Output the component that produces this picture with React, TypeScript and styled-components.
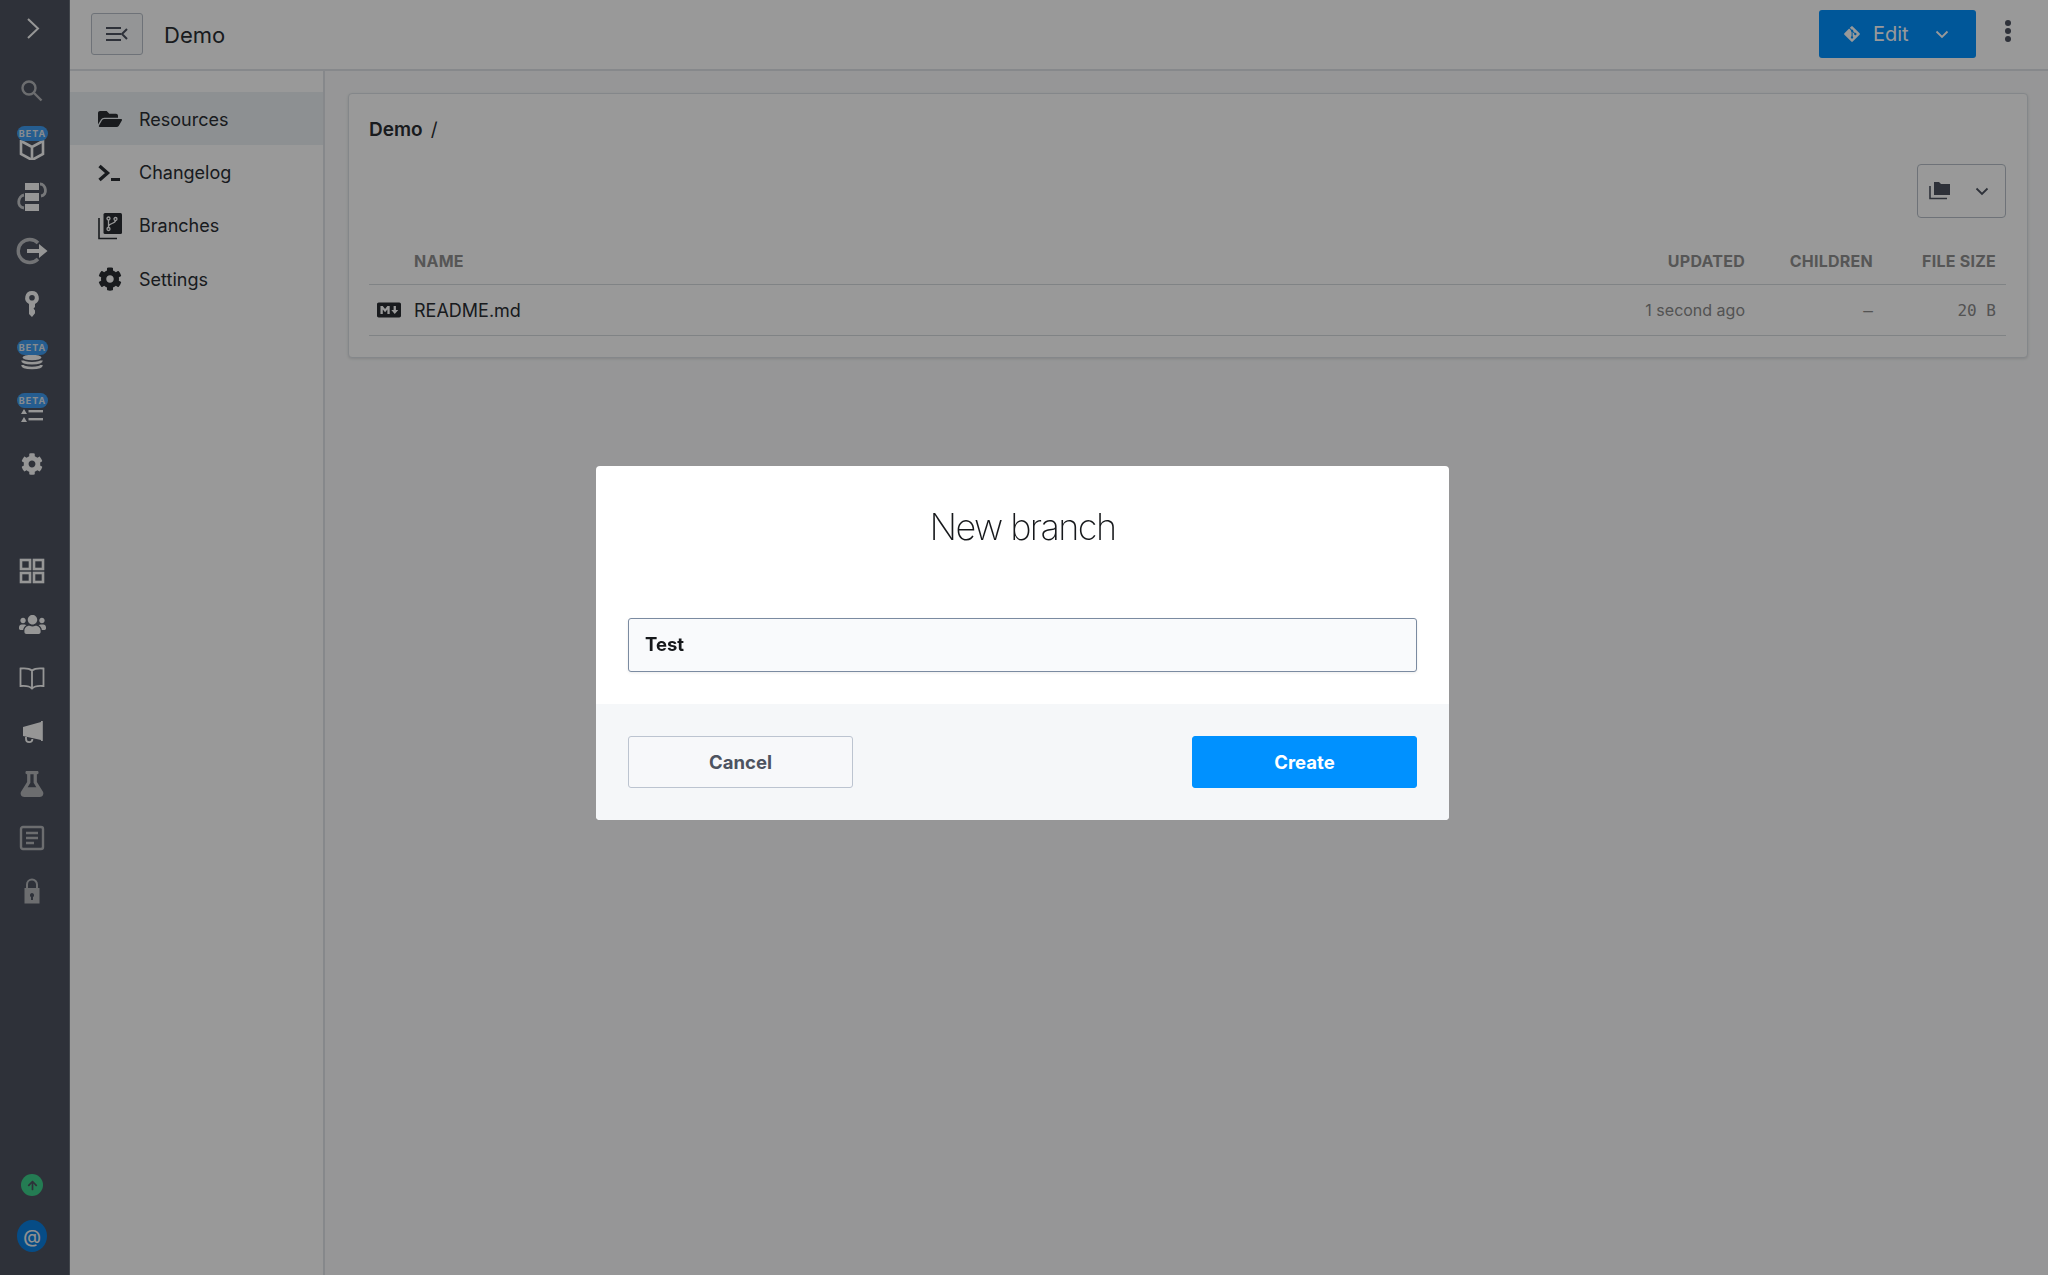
import React from 'react';
import styled, { createGlobalStyle } from 'styled-components';
import { FaCog, FaFlask, FaFolderOpen, FaGitAlt, FaMarkdown, FaUsers, FaArrowUp } from 'react-icons/fa';

const GlobalStyle = createGlobalStyle`
  html, body {
    margin: 0;
    padding: 0;
    height: 100%;
    font-family: Inter, "Liberation Sans", sans-serif;
    background: #fafbfc;
  }
  * { box-sizing: border-box; }
`;

const Page = styled.div`
  display: flex;
  width: 2048px;
  height: 1275px;
  overflow: hidden;
`;

const Rail = styled.aside`
  width: 70px;
  flex: none;
  display: flex;
  flex-direction: column;
  background: #4d5360;
  border-right: 1px solid #6d737e;
  padding-right: 5px;
`;

const RailGroup = styled.div<{ $gap?: number }>`
  display: flex;
  flex-direction: column;
  margin-top: ${(p) => p.$gap ?? 0}px;
`;

const RailItem = styled.div<{ $dim?: boolean; $height?: number }>`
  position: relative;
  height: ${(p) => p.$height ?? 53.4}px;
  display: flex;
  align-items: center;
  justify-content: center;
  color: ${(p) => (p.$dim ? '#b4b6ba' : '#fbfbfb')};
`;

const BetaBadge = styled.span`
  position: absolute;
  left: 17px;
  top: 9px;
  width: 31px;
  height: 15px;
  border-radius: 8px;
  background: #3f9cf0;
  color: #e2e8ef;
  font-size: 9px;
  font-weight: 700;
  letter-spacing: 1px;
  line-height: 15px;
  text-align: center;
`;

const RailFoot = styled.div`
  margin-top: auto;
  display: flex;
  flex-direction: column;
  align-items: center;
  gap: 24px;
  padding-bottom: 23px;
`;

const UpdateDot = styled.div`
  width: 22px;
  height: 22px;
  border-radius: 50%;
  background: #3dcf8a;
  color: #4d5360;
  display: flex;
  align-items: center;
  justify-content: center;
  font-size: 11px;
`;

const AvatarDot = styled.div`
  width: 30px;
  height: 32px;
  border-radius: 50%;
  background: #0a7fe0;
  color: #f0f0f0;
  display: flex;
  align-items: center;
  justify-content: center;
  font-size: 18px;
  font-weight: 500;
`;

const Body = styled.div`
  flex: 1;
  display: flex;
  flex-direction: column;
  min-width: 0;
`;

const TopBar = styled.header`
  height: 71px;
  flex: none;
  display: flex;
  align-items: center;
  background: #fff;
  border-bottom: 2px solid #dfe3e8;
  padding: 0 34px 2px 21px;
`;

const ToggleButton = styled.button`
  width: 52px;
  height: 42px;
  display: flex;
  align-items: center;
  justify-content: center;
  background: #f7f8fa;
  border: 1px solid #b7bfc9;
  border-radius: 3px;
  color: #4d5360;
  padding: 0;
`;

const Title = styled.h1`
  margin: 3px 0 0 21px;
  font-size: 22px;
  font-weight: 400;
  color: #2a2e33;
`;

const EditButton = styled.button`
  margin-left: auto;
  width: 157px;
  height: 48px;
  display: flex;
  align-items: center;
  background: #0091ff;
  border: 0;
  border-radius: 3px;
  color: #fff;
  padding: 1px 0 0 24px;
  font-family: inherit;
  font-size: 20px;
  gap: 12px;

  svg:last-child {
    margin-left: 14px;
  }
`;

const Kebab = styled.div`
  width: 12px;
  margin: 0 0 0 26px;
  display: flex;
  flex-direction: column;
  align-items: center;
  gap: 2px;
  transform: translateY(-3px);

  span {
    width: 6px;
    height: 6px;
    border-radius: 50%;
    background: #4d5360;
  }
`;

const Columns = styled.div`
  flex: 1;
  display: flex;
  min-height: 0;
`;

const NavPanel = styled.nav`
  width: 255px;
  flex: none;
  background: #fff;
  border-right: 2px solid #dfe3e8;
  padding-top: 21px;
`;

const NavRow = styled.div<{ $active?: boolean }>`
  height: 53.4px;
  display: flex;
  align-items: center;
  gap: 17px;
  padding: 1px 0 0 28px;
  background: ${(p) => (p.$active ? '#ebf1f4' : 'transparent')};
  color: #2a2e33;
  font-size: 18px;
`;

const NavIcon = styled.span`
  width: 24px;
  height: 24px;
  display: flex;
  align-items: center;
  justify-content: center;
  font-size: 24px;
`;

const Content = styled.main`
  flex: 1;
  padding: 22px 20px 0 23px;
  min-width: 0;
`;

const Card = styled.section`
  height: 265px;
  background: #fff;
  border: 1px solid #dde1e6;
  border-radius: 4px;
  box-shadow: 0 1px 3px rgba(0, 0, 0, 0.12);
  padding: 0 21px 0 20px;
`;

const Crumb = styled.div`
  height: 70px;
  display: flex;
  align-items: center;
  gap: 8px;
  color: #2a2e33;
  font-size: 19px;
  font-weight: 600;
  padding-top: 1px;

  span {
    font-weight: 400;
  }
`;

const ToolRow = styled.div`
  display: flex;
  justify-content: flex-end;
`;

const ViewSelect = styled.div`
  width: 89px;
  height: 54px;
  display: flex;
  align-items: center;
  justify-content: space-between;
  background: #fff;
  border: 1px solid #b7bfc9;
  border-radius: 4px;
  color: #4d5360;
  padding: 0 16px 0 11px;
`;

const TableRow = styled.div<{ $head?: boolean }>`
  display: grid;
  grid-template-columns: 45px 1fr 120px 128px 123px;
  align-items: center;
  height: ${(p) => (p.$head ? 67 : 51)}px;
  padding-top: ${(p) => (p.$head ? 20 : 0)}px;
  border-bottom: 1px solid #d6dade;
`;

const FileGlyph = styled.span`
  display: flex;
  padding-left: 8px;
  color: #2a2e33;
  font-size: 24px;
`;

const HeadCell = styled.div<{ $right?: boolean }>`
  padding-right: 10px;
  font-size: 16px;
  font-weight: 700;
  letter-spacing: 0.25px;
  color: #8f8f8f;
  text-align: ${(p) => (p.$right ? 'right' : 'left')};
`;

const NameCell = styled.div`
  font-size: 18px;
  color: #2a2e33;
`;

const DataCell = styled.div<{ $mono?: boolean }>`
  padding-right: 10px;
  text-align: right;
  color: #8a8a8a;
  font-size: 16px;
  font-family: ${(p) => (p.$mono ? '"DejaVu Sans Mono", monospace' : 'inherit')};
  white-space: nowrap;
`;

const Overlay = styled.div`
  position: fixed;
  inset: 0;
  display: flex;
  align-items: flex-start;
  justify-content: center;
  padding: 466px 3px 0 0;
  background: rgba(0, 0, 0, 0.4);
`;

const Modal = styled.div`
  width: 853px;
  height: 354px;
  display: flex;
  flex-direction: column;
  background: #fff;
  border-radius: 4px;
  overflow: hidden;
`;

const ModalBody = styled.div`
  height: 238px;
  flex: none;
  padding: 0 32px;
  display: flex;
  flex-direction: column;
`;

const ModalTitle = styled.h2`
  margin: 0;
  height: 152px;
  display: flex;
  align-items: center;
  justify-content: center;
  padding-bottom: 31px;
  font-size: 36px;
  font-weight: 200;
  letter-spacing: -1.6px;
  color: #16181b;
`;

const NameInput = styled.input`
  width: 100%;
  height: 54px;
  padding: 0 16px 2px;
  background: #f9fafc;
  border: 1px solid #7b8ba1;
  border-radius: 3px;
  box-shadow: 0 1px 3px rgba(0, 0, 0, 0.08);
  font-family: inherit;
  font-size: 18.5px;
  font-weight: 700;
  color: #16181b;
  outline: none;
`;

const ModalFoot = styled.div`
  flex: 1;
  display: flex;
  justify-content: space-between;
  padding: 32px 32px 0;
  background: #f5f7f9;
`;

const FootButton = styled.button<{ $primary?: boolean }>`
  width: 225px;
  height: 52px;
  border-radius: 3px;
  border: 1px solid ${(p) => (p.$primary ? '#0091ff' : '#bcc4d0')};
  background: ${(p) => (p.$primary ? '#0091ff' : '#f7f8fa')};
  color: ${(p) => (p.$primary ? '#fff' : '#4d5360')};
  font-family: inherit;
  font-size: 18.5px;
  font-weight: 700;
`;

const Chevron = ({ size = 14 }: { size?: number }) => (
  <svg width={size} height={size} viewBox="0 0 14 14" fill="none" stroke="currentColor" strokeWidth="1.8">
    <path d="M1.5 4.5 7 10l5.5-5.5" />
  </svg>
);

const Glyph = ({ children }: { children: React.ReactNode }) => (
  <svg width="32" height="32" viewBox="0 0 32 32" fill="currentColor">
    {children}
  </svg>
);

const RailIcons: Record<string, React.ReactNode> = {
  search: (
    <g fill="none" stroke="currentColor" strokeWidth="2.4">
      <circle cx="13" cy="13" r="6.5" />
      <path d="M18 18l7.5 7.5" />
    </g>
  ),
  cube: (
    <g fill="none" stroke="currentColor" strokeWidth="2.6">
      <path d="M5 12v14l11 6 11-6V12" />
      <path d="M5 13l11 6 11-6M16 19v12" />
    </g>
  ),
  stack: (
    <>
      <rect x="9" y="2" width="14" height="7" />
      <rect x="9" y="12" width="14" height="8" />
      <rect x="9" y="23" width="14" height="7" />
      <path d="M24 3c6 0 8 11 1 12M8 14C2 15 0 26 8 27" fill="none" stroke="currentColor" strokeWidth="2.8" opacity=".7" />
    </>
  ),
  exit: (
    <>
      <path d="M22 8A11.5 11.5 0 1 0 22 24" fill="none" stroke="currentColor" strokeWidth="3.4" opacity=".65" />
      <path d="M11 14h12V9l8.5 7-8.5 7v-5H11z" />
    </>
  ),
  key: (
    <path
      fillRule="evenodd"
      d="M16 3a6.8 6.8 0 0 1 3 12.9V19l-1.5 1.6 1.5 2v2.6L16 29l-3-3V15.9A6.8 6.8 0 0 1 16 3zm0 4a2.8 2.8 0 1 0 0 5.6A2.8 2.8 0 0 0 16 7z"
    />
  ),
  db: (
    <g fill="none" stroke="currentColor" strokeWidth="2.6">
      <ellipse cx="16" cy="15.5" rx="9.5" ry="2.8" fill="currentColor" stroke="none" />
      <path d="M6.5 18.500c0 3.600 19 3.600 19 0M6.500 23c0 4 19 4 19 0" />
    </g>
  ),
  list: (
    <>
      <path d="M5 19l3-5 3 5zM5 27l3-5 3 5z" />
      <rect x="12.500" y="15" width="14.500" height="2.400" />
      <rect x="12.500" y="23" width="14.500" height="2.400" />
    </>
  ),
  grid: (
    <g fill="none" stroke="currentColor" strokeWidth="2.6">
      <rect x="5" y="5" width="9" height="9" />
      <rect x="18" y="5" width="9" height="9" />
      <rect x="5" y="18" width="9" height="9" />
      <rect x="18" y="18" width="9" height="9" />
    </g>
  ),
  book: (
    <path
      d="M16 8.500C13.500 6.500 9 6 4.500 6.500V24c4.500-.5 9 0 11.500 2.500 2.500-2.500 7-3 11.500-2.500V6.500C23 6 18.500 6.500 16 8.500zm0 0V26"
      fill="none"
      stroke="currentColor"
      strokeWidth="1.800"
    />
  ),
  horn: (
    <>
      <path d="M7 12l18-5v18l-18-4z" />
      <rect x="25" y="6" width="1.800" height="20" />
      <path d="M10 22v2a3.200 3.200 0 0 0 6.400 0" fill="none" stroke="currentColor" strokeWidth="1.800" />
    </>
  ),
  doc: (
    <g fill="none" stroke="currentColor" strokeWidth="2.400">
      <rect x="5" y="5" width="22" height="22" rx="2" />
      <path d="M10 11h12M10 16h12M10 21h8" />
    </g>
  ),
  lock: (
    <>
      <path d="M11 14V9.500a5 5 0 0 1 10 0V14" fill="none" stroke="currentColor" strokeWidth="2" />
      <path
        fillRule="evenodd"
        d="M8.500 13h15v15.500h-15zM16 18a2.200 2.200 0 0 0-1 4.100V25h2v-2.900A2.200 2.200 0 0 0 16 18z"
      />
    </>
  ),
};

const App = () => (
  <>
    <GlobalStyle />
    <Page>
      <Rail>
        <RailItem $height={56}>
          <svg width="32" height="32" viewBox="0 0 32 32" fill="none" stroke="currentColor" strokeWidth="2">
            <path d="M12 7l10 9.500-10 9.500" />
          </svg>
        </RailItem>
        <RailGroup $gap={8}>
          <RailItem $dim><Glyph>{RailIcons.search}</Glyph></RailItem>
          <RailItem><BetaBadge>BETA</BetaBadge><Glyph>{RailIcons.cube}</Glyph></RailItem>
          <RailItem><Glyph>{RailIcons.stack}</Glyph></RailItem>
          <RailItem><Glyph>{RailIcons.exit}</Glyph></RailItem>
          <RailItem><Glyph>{RailIcons.key}</Glyph></RailItem>
          <RailItem><BetaBadge>BETA</BetaBadge><Glyph>{RailIcons.db}</Glyph></RailItem>
          <RailItem><BetaBadge>BETA</BetaBadge><Glyph>{RailIcons.list}</Glyph></RailItem>
          <RailItem><FaCog size={22} /></RailItem>
        </RailGroup>
        <RailGroup $gap={53}>
          <RailItem><Glyph>{RailIcons.grid}</Glyph></RailItem>
          <RailItem><FaUsers size={27} /></RailItem>
          <RailItem><Glyph>{RailIcons.book}</Glyph></RailItem>
          <RailItem><Glyph>{RailIcons.horn}</Glyph></RailItem>
          <RailItem $dim><FaFlask size={26} /></RailItem>
          <RailItem $dim><Glyph>{RailIcons.doc}</Glyph></RailItem>
          <RailItem $dim><Glyph>{RailIcons.lock}</Glyph></RailItem>
        </RailGroup>
        <RailFoot>
          <UpdateDot><FaArrowUp /></UpdateDot>
          <AvatarDot>@</AvatarDot>
        </RailFoot>
      </Rail>

      <Body>
        <TopBar>
          <ToggleButton>
            <svg width="24" height="20" viewBox="0 0 24 20" fill="none" stroke="currentColor" strokeWidth="2">
              <path d="M1 4h15M1 10h15M1 16h15M22 5l-5 5 5 5" />
            </svg>
          </ToggleButton>
          <Title>Demo</Title>
          <EditButton>
            <FaGitAlt size={18} />
            Edit
            <Chevron />
          </EditButton>
          <Kebab>
            <span />
            <span />
            <span />
          </Kebab>
        </TopBar>
        <Columns>
          <NavPanel>
            <NavRow $active>
              <NavIcon><FaFolderOpen /></NavIcon>
              Resources
            </NavRow>
            <NavRow>
              <NavIcon>
                <svg width="24" height="24" viewBox="0 0 24 24" fill="none" stroke="currentColor">
                  <path d="M1.500 5l8 7-8 7" strokeWidth="3.400" />
                  <path d="M13 18.500h9" strokeWidth="3" />
                </svg>
              </NavIcon>
              Changelog
            </NavRow>
            <NavRow>
              <NavIcon>
                <svg width="24" height="28" viewBox="0 0 24 28" fill="none">
                  <rect x="5.500" y="1" width="18.500" height="21" rx="1.500" fill="currentColor" />
                  <path d="M1 6v20.500h18" stroke="currentColor" strokeWidth="1.600" />
                  <g stroke="#fff" strokeWidth="1.300">
                    <path d="M10.500 8v7.500M17.500 8.500c0 3.500-7 2.500-7 6" />
                    <circle cx="10.500" cy="6.500" r="1.500" />
                    <circle cx="17.500" cy="7" r="1.500" />
                    <circle cx="10.500" cy="17" r="1.500" />
                  </g>
                </svg>
              </NavIcon>
              Branches
            </NavRow>
            <NavRow>
              <NavIcon><FaCog /></NavIcon>
              Settings
            </NavRow>
          </NavPanel>
          <Content>
            <Card>
              <Crumb>
                Demo <span>/</span>
              </Crumb>
              <ToolRow>
                <ViewSelect>
                  <svg width="22" height="20" viewBox="0 0 22 20" fill="currentColor">
                    <path d="M5 1h5l2 2h9v11H5z" />
                    <path d="M1 5v12.500h17" fill="none" stroke="currentColor" strokeWidth="1.600" />
                  </svg>
                  <Chevron />
                </ViewSelect>
              </ToolRow>
              <TableRow $head>
                <span />
                <HeadCell>NAME</HeadCell>
                <HeadCell $right>UPDATED</HeadCell>
                <HeadCell $right>CHILDREN</HeadCell>
                <HeadCell $right>FILE SIZE</HeadCell>
              </TableRow>
              <TableRow>
                <FileGlyph><FaMarkdown /></FileGlyph>
                <NameCell>README.md</NameCell>
                <DataCell>1 second ago</DataCell>
                <DataCell $mono>–</DataCell>
                <DataCell $mono>20 B</DataCell>
              </TableRow>
            </Card>
          </Content>
        </Columns>
      </Body>

      <Overlay>
        <Modal>
          <ModalBody>
            <ModalTitle>New branch</ModalTitle>
            <NameInput defaultValue="Test" />
          </ModalBody>
          <ModalFoot>
            <FootButton>Cancel</FootButton>
            <FootButton $primary>Create</FootButton>
          </ModalFoot>
        </Modal>
      </Overlay>
    </Page>
  </>
);

export default App;
